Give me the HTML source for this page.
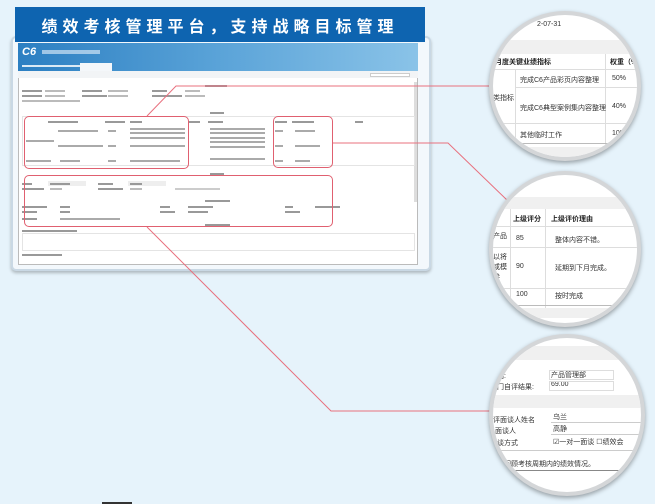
<!DOCTYPE html>
<html><head><meta charset="utf-8"><style>
*{margin:0;padding:0;box-sizing:border-box}
body{width:655px;height:504px;overflow:hidden;background:#e6f3fb;font-family:"Liberation Sans","Noto Sans CJK SC",sans-serif;position:relative}
.a{position:absolute}
.g{position:absolute;height:2px;background:#999}
.rb{position:absolute;border:1px solid #e06070;border-radius:5px}
.c{position:absolute;border-radius:50%;background:#fff;border:4px solid #d4d6d8;box-shadow:0 2px 5px rgba(0,0,0,.35);overflow:hidden}
.c .s{position:absolute;font-size:7px;color:#333;white-space:nowrap}
.c .b{font-weight:bold;color:#222}
.band{position:absolute;left:0;right:0;background:#f0f0f0}
.hl{position:absolute;left:0;right:0;height:1px;background:#ddd}
.vl{position:absolute;width:1px;background:#ddd}
</style></head><body>
<div class="a" style="left:11px;top:36px;width:420px;height:235px;background:#f3f8fc;border:2px solid #c9d8e4;border-radius:5px;box-shadow:0 2px 3px rgba(0,0,0,.25)"></div>
<div class="a" style="left:18px;top:43px;width:400px;height:222px;background:#fff;border:1px solid #bbb"></div>
<div class="a" style="left:18px;top:43px;width:400px;height:28px;background:linear-gradient(90deg,#2c7fc2,#5aa3d8 50%,#8ac3e8)"></div>
<div class="a" style="left:22px;top:46px;font-size:11px;font-weight:bold;color:#fff;font-style:italic">C6</div>
<div class="a" style="left:42px;top:50px;width:58px;height:4px;background:#cfe3f3;opacity:.7"></div>
<div class="a" style="left:22px;top:65px;width:60px;height:2px;background:#dbeaf5"></div>
<div class="a" style="left:80px;top:63px;width:32px;height:8px;background:#f4f7fa"></div>
<div class="a" style="left:18px;top:71px;width:400px;height:7px;background:#f2f4f6"></div>
<div class="a" style="left:370px;top:73px;width:40px;height:4px;border:1px solid #ccc;background:#fff"></div>
<div class="a" style="left:414px;top:82px;width:3px;height:120px;background:#ddd"></div>
<div class="g" style="left:205px;top:85px;width:22px"></div>
<div class="g" style="left:22px;top:90px;width:20px"></div><div class="g" style="left:45px;top:90px;width:20px;background:#bbb"></div><div class="g" style="left:82px;top:90px;width:20px"></div><div class="g" style="left:108px;top:90px;width:20px;background:#bbb"></div><div class="g" style="left:152px;top:90px;width:15px"></div><div class="g" style="left:185px;top:90px;width:15px;background:#bbb"></div>
<div class="g" style="left:22px;top:95px;width:20px"></div><div class="g" style="left:45px;top:95px;width:20px;background:#bbb"></div><div class="g" style="left:82px;top:95px;width:25px"></div><div class="g" style="left:108px;top:95px;width:20px;background:#bbb"></div><div class="g" style="left:152px;top:95px;width:30px"></div><div class="g" style="left:185px;top:95px;width:20px;background:#bbb"></div>
<div class="g" style="left:22px;top:100px;width:58px;background:#bbb"></div>
<div class="g" style="left:210px;top:112px;width:14px"></div>
<div class="a" style="left:22px;top:116px;width:393px;height:50px;border:1px solid #e4e4e4"></div>
<div class="g" style="left:48px;top:121px;width:30px"></div><div class="g" style="left:105px;top:121px;width:20px"></div><div class="g" style="left:130px;top:121px;width:12px"></div><div class="g" style="left:188px;top:121px;width:12px"></div><div class="g" style="left:208px;top:121px;width:15px"></div><div class="g" style="left:275px;top:121px;width:12px"></div><div class="g" style="left:292px;top:121px;width:22px"></div><div class="g" style="left:355px;top:121px;width:8px"></div>
<div class="g" style="left:58px;top:130px;width:40px;background:#aaa"></div><div class="g" style="left:108px;top:130px;width:8px;background:#aaa"></div><div class="g" style="left:130px;top:128px;width:55px;background:#aaa"></div><div class="g" style="left:130px;top:132px;width:55px;background:#aaa"></div><div class="g" style="left:210px;top:128px;width:55px;background:#aaa"></div><div class="g" style="left:210px;top:132px;width:55px;background:#aaa"></div><div class="g" style="left:275px;top:130px;width:8px;background:#aaa"></div><div class="g" style="left:295px;top:130px;width:20px;background:#aaa"></div>
<div class="g" style="left:26px;top:140px;width:28px;background:#aaa"></div><div class="g" style="left:130px;top:137px;width:55px;background:#aaa"></div><div class="g" style="left:210px;top:137px;width:55px;background:#aaa"></div><div class="g" style="left:210px;top:141px;width:55px;background:#aaa"></div>
<div class="g" style="left:58px;top:145px;width:45px;background:#aaa"></div><div class="g" style="left:108px;top:145px;width:8px;background:#aaa"></div><div class="g" style="left:130px;top:145px;width:55px;background:#aaa"></div><div class="g" style="left:210px;top:146px;width:55px;background:#aaa"></div><div class="g" style="left:275px;top:145px;width:8px;background:#aaa"></div><div class="g" style="left:295px;top:145px;width:25px;background:#aaa"></div>
<div class="g" style="left:26px;top:160px;width:25px;background:#aaa"></div><div class="g" style="left:60px;top:160px;width:20px;background:#aaa"></div><div class="g" style="left:108px;top:160px;width:8px;background:#aaa"></div><div class="g" style="left:130px;top:160px;width:50px;background:#aaa"></div><div class="g" style="left:210px;top:158px;width:55px;background:#aaa"></div><div class="g" style="left:275px;top:160px;width:8px;background:#aaa"></div><div class="g" style="left:295px;top:160px;width:15px;background:#aaa"></div>
<div class="g" style="left:210px;top:173px;width:14px"></div>
<div class="g" style="left:22px;top:183px;width:10px"></div><div class="a" style="left:48px;top:181px;width:38px;height:5px;background:#eee"></div><div class="g" style="left:50px;top:183px;width:20px"></div><div class="g" style="left:98px;top:183px;width:15px"></div><div class="a" style="left:128px;top:181px;width:38px;height:5px;background:#eee"></div><div class="g" style="left:130px;top:183px;width:12px"></div>
<div class="g" style="left:22px;top:188px;width:22px"></div><div class="g" style="left:50px;top:188px;width:12px;background:#bbb"></div><div class="g" style="left:98px;top:188px;width:25px"></div><div class="g" style="left:130px;top:188px;width:12px;background:#bbb"></div><div class="g" style="left:175px;top:188px;width:45px;background:#ccc"></div>
<div class="g" style="left:205px;top:200px;width:25px"></div>
<div class="g" style="left:22px;top:206px;width:25px"></div><div class="g" style="left:60px;top:206px;width:10px"></div><div class="g" style="left:160px;top:206px;width:10px"></div><div class="g" style="left:188px;top:206px;width:25px"></div><div class="g" style="left:285px;top:206px;width:8px"></div><div class="g" style="left:315px;top:206px;width:25px"></div>
<div class="g" style="left:22px;top:211px;width:15px"></div><div class="g" style="left:60px;top:211px;width:10px"></div><div class="g" style="left:160px;top:211px;width:15px"></div><div class="g" style="left:188px;top:211px;width:20px"></div><div class="g" style="left:285px;top:211px;width:15px"></div>
<div class="g" style="left:22px;top:218px;width:15px"></div><div class="g" style="left:60px;top:218px;width:60px;background:#aaa"></div>
<div class="g" style="left:205px;top:224px;width:25px"></div>
<div class="g" style="left:22px;top:230px;width:55px"></div>
<div class="a" style="left:22px;top:233px;width:393px;height:18px;border:1px solid #e4e4e4"></div>
<div class="g" style="left:22px;top:254px;width:40px"></div>
<div class="rb" style="left:24px;top:116px;width:165px;height:53px"></div>
<div class="rb" style="left:273px;top:116px;width:60px;height:52px"></div>
<div class="rb" style="left:24px;top:175px;width:309px;height:52px"></div>
<div class="a" style="left:15px;top:7px;width:410px;height:35px;background:#0e64b0"></div>
<div class="a" style="left:15px;top:13px;width:410px;text-align:center;font-size:16px;font-weight:bold;color:#fff;letter-spacing:5px;white-space:nowrap">绩效考核管理平台，支持战略目标管理</div>
<svg class="a" style="left:0;top:0" width="655" height="504"><g stroke="#e8707e" stroke-width="1" fill="none">
<polyline points="147,116 176,86 500,86"/>
<polyline points="333,143 448,143 508,201"/>
<polyline points="147,227 331,411 500,411"/></g></svg>
<div class="c" style="left:489px;top:11px;width:152px;height:150px">
<div class="s" style="left:44px;top:6px">2-07-31</div>
<div class="band" style="top:25px;height:14px"></div>
<div class="s b" style="left:2px;top:42px">月度关键业绩指标</div><div class="s b" style="left:117px;top:42px">权重（%</div>
<div class="hl" style="top:54px"></div><div class="vl" style="left:22px;top:54px;height:80px"></div><div class="vl" style="left:112px;top:39px;height:95px"></div>
<div class="s" style="left:27px;top:60px">完成C6产品彩页内容整理</div><div class="s" style="left:119px;top:60px">50%</div>
<div class="hl" style="top:72px;left:22px"></div>
<div class="s" style="left:0px;top:78px">类指标</div>
<div class="s" style="left:27px;top:88px">完成C6典型案例集内容整理</div><div class="s" style="left:119px;top:88px">40%</div>
<div class="hl" style="top:108px"></div>
<div class="s" style="left:27px;top:115px">其他临时工作</div><div class="s" style="left:119px;top:115px">10%</div>
<div class="hl" style="top:128px;background:#bbb"></div>
<div class="band" style="top:132px;height:10px"></div>
</div>
<div class="c" style="left:489px;top:171px;width:152px;height:156px">
<div class="band" style="top:22px;height:12px"></div>
<div class="s b" style="left:20px;top:39px">上级评分</div><div class="s b" style="left:58px;top:39px">上级评价理由</div>
<div class="hl" style="top:51px"></div><div class="vl" style="left:17px;top:34px;height:100px"></div><div class="vl" style="left:52px;top:34px;height:100px"></div>
<div class="s" style="left:0px;top:56px">产品</div><div class="s" style="left:23px;top:60px">85</div><div class="s" style="left:62px;top:60px">整体内容不错。</div>
<div class="hl" style="top:72px"></div>
<div class="s" style="left:0;top:78px;line-height:10px">以将<br>或模<br>参</div><div class="s" style="left:23px;top:88px">90</div><div class="s" style="left:62px;top:88px">延期到下月完成。</div>
<div class="hl" style="top:113px"></div>
<div class="s" style="left:2px;top:116px">实</div><div class="s" style="left:23px;top:116px">100</div><div class="s" style="left:62px;top:116px">按时完成</div>
<div class="hl" style="top:130px;background:#bbb"></div>
<div class="band" style="top:133px;height:10px"></div>
</div>
<div class="c" style="left:489px;top:334px;width:156px;height:162px">
<div class="band" style="top:8px;height:14px"></div>
<div class="s" style="left:4px;top:33px">门:</div><div class="s" style="left:58px;top:32px">产品管理部</div>
<div class="a" style="left:56px;top:32px;width:65px;height:10px;border:1px solid #ddd"></div>
<div class="s" style="left:4px;top:44px">门自评结果:</div><div class="s" style="left:58px;top:43px">69.00</div>
<div class="a" style="left:56px;top:43px;width:65px;height:10px;border:1px solid #ddd"></div>
<div class="band" style="top:57px;height:13px"></div>
<div class="s" style="left:0;top:77px">评面谈人姓名</div><div class="s" style="left:60px;top:74px">乌兰</div>
<div class="a" style="left:58px;top:84px;width:90px;height:1px;background:#ccc"></div>
<div class="s" style="left:2px;top:88px">面谈人</div><div class="s" style="left:60px;top:86px">高静</div>
<div class="a" style="left:58px;top:96px;width:90px;height:1px;background:#ccc"></div>
<div class="s" style="left:4px;top:100px">谈方式</div><div class="s" style="left:60px;top:99px">☑一对一面谈 ☐绩效会</div>
<div class="a" style="left:0;top:112px;width:150px;height:1px;background:#ccc"></div>
<div class="s" style="left:4px;top:121px">起回顾考核周期内的绩效情况。</div>
<div class="a" style="left:0;top:132px;width:150px;height:1px;background:#888"></div>
</div>
<div class="a" style="left:102px;top:502px;width:30px;height:2px;background:#333"></div>
</body></html>
